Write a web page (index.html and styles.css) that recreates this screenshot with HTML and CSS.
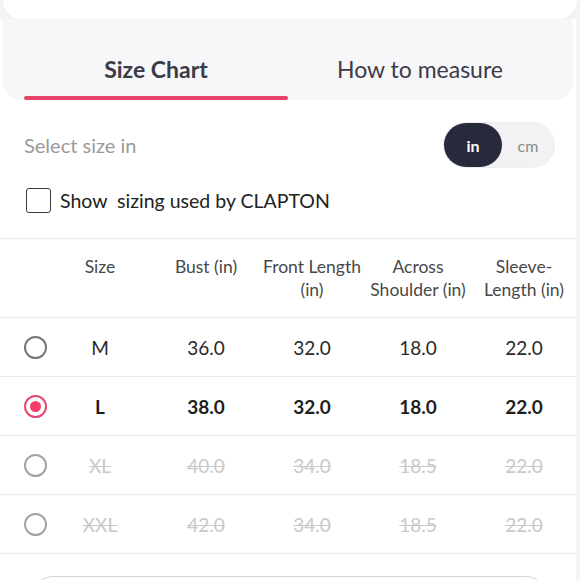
FILE: index.html
```html
<!DOCTYPE html>
<html>
<head>
<meta charset="utf-8">
<link rel="stylesheet" href="styles.css">
</head>
<body>
<div class="top-card"></div>
<div class="sheet">
  <div class="tabs">
    <div class="tab active">Size Chart</div>
    <div class="tab">How to measure</div>
  </div>
  <div class="controls">
    <div class="unit-row">
      <span class="unit-label">Select size in</span>
      <div class="toggle">
        <span class="opt on">in</span>
        <span class="opt">cm</span>
      </div>
    </div>
    <label class="check-row">
      <span class="checkbox"></span>
      <span class="check-text">Show&nbsp; sizing used by CLAPTON</span>
    </label>
  </div>
  <div class="table">
    <div class="row head">
      <span></span>
      <span>Size</span>
      <span>Bust (in)</span>
      <span>Front Length (in)</span>
      <span>Across Shoulder (in)</span>
      <span>Sleeve-<br>Length (in)</span>
    </div>
    <div class="row">
      <span class="radio"></span>
      <span>M</span><span>36.0</span><span>32.0</span><span>18.0</span><span>22.0</span>
    </div>
    <div class="row selected">
      <span class="radio"></span>
      <span>L</span><span>38.0</span><span>32.0</span><span>18.0</span><span>22.0</span>
    </div>
    <div class="row disabled">
      <span class="radio"></span>
      <span>XL</span><span>40.0</span><span>34.0</span><span>18.5</span><span>22.0</span>
    </div>
    <div class="row disabled">
      <span class="radio"></span>
      <span>XXL</span><span>42.0</span><span>34.0</span><span>18.5</span><span>22.0</span>
    </div>
  </div>
  <div class="footer">
    <div class="button"></div>
  </div>
</div>
</body>
</html>
```
FILE: styles.css
```css
html, body {
  margin: 0;
  padding: 0;
}
body {
  background: #f4f4f6;
  font-family: Lato, "Liberation Sans", sans-serif;
  width: 580px;
  height: 580px;
  overflow: hidden;
}
.top-card {
  height: 19px;
  margin: 0 3px;
  background: #fff;
  border-radius: 0 0 18px 18px;
  box-shadow: 0 1px 2px rgba(0,0,0,0.04);
}
.sheet {
  width: 576px;
  background: #fff;
}
.tabs {
  background: #f7f7f9;
  border-radius: 0 0 18px 18px;
  margin: 0 3px;
  padding: 0 21px;
  display: flex;
  height: 81px;
}
.tab {
  flex: 1;
  text-align: center;
  font-size: 23px;
  line-height: 28px;
  color: #3b3b47;
  padding-top: 36px;
  box-sizing: border-box;
  position: relative;
}
.tab.active {
  font-weight: 700;
}
.tab.active::after {
  content: "";
  position: absolute;
  left: 0;
  right: 0;
  bottom: 0;
  height: 4px;
  border-radius: 2px;
  background: #e8436b;
}
.controls {
  padding: 22px 21px 0 24px;
}
.unit-row {
  display: flex;
  justify-content: space-between;
  align-items: center;
}
.unit-label {
  font-size: 20px;
  color: #9a9a9a;
}
.toggle {
  display: flex;
  background: #f2f2f4;
  border-radius: 24px;
  height: 46px;
  width: 112px;
  box-sizing: border-box;
  border: 1px solid #ededf0;
}
.opt {
  flex: 1;
  display: flex;
  align-items: center;
  justify-content: center;
  font-size: 16px;
  color: #8a8a8e;
  border-radius: 24px;
}
.opt.on {
  flex: 0 0 58px;
  background: #262a3a;
  color: #fff;
  font-weight: 700;
}
.check-row {
  display: flex;
  align-items: center;
  gap: 9px;
  margin-top: 19px;
  padding-left: 2px;
  height: 26px;
}
.checkbox {
  width: 23px;
  height: 23px;
  border: 1.6px solid #3a3a3a;
  border-radius: 3px;
  box-sizing: content-box;
}
.check-text {
  font-size: 19.5px;
  color: #222;
}
.table {
  margin-top: 25px;
  border-top: 1.5px solid #ececec;
}
.row {
  display: grid;
  grid-template-columns: 47px repeat(5, 106px);
  align-items: center;
  height: 59px;
  border-bottom: 1.5px solid #ececec;
  box-sizing: border-box;
  font-size: 19px;
  color: #2a2a2a;
  text-align: center;
}
.row.head {
  height: 79px;
  align-items: start;
  padding-top: 16px;
  font-size: 17.5px;
  line-height: 23px;
  color: #484848;
}
.radio {
  justify-self: end;
  width: 23px;
  height: 23px;
  border: 2.2px solid #777;
  border-radius: 50%;
  box-sizing: border-box;
  position: relative;
}
.row.selected {
  font-weight: 700;
  color: #1e1e1e;
}
.row.selected .radio {
  border-color: #e5486e;
}
.row.selected .radio::after {
  content: "";
  position: absolute;
  left: 4px;
  top: 4px;
  width: 11px;
  height: 11px;
  border-radius: 50%;
  background: #ef3f69;
}
.row.disabled {
  color: #c9c9c9;
  text-decoration: line-through;
}
.row.disabled .radio {
  border-color: #a3a3a3;
}
.footer {
  padding: 22px 30px 0 33px;
}
.button {
  height: 40px;
  border: 1.5px solid #d4d4d4;
  border-radius: 20px;
}
```
